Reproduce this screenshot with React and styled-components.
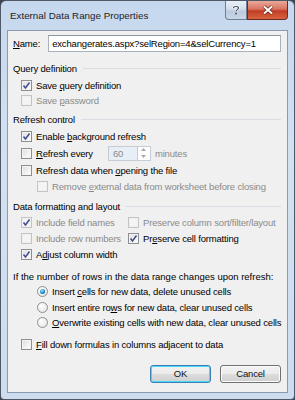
import React, { useState } from "react";
import styled, { createGlobalStyle } from "styled-components";

const Global = createGlobalStyle`
  html, body { margin: 0; padding: 0; background: #3b4250; }
  body { width: 295px; height: 400px; overflow: hidden; }
`;

const Frame = styled.div`
  box-sizing: border-box;
  width: 295px;
  height: 400px;
  border: 1px solid #4e5867;
  border-radius: 6px 6px 4px 4px;
  background: linear-gradient(180deg, #c6d8ee 0%, #d3e1f2 40%, #cddcef 100%);
  display: flex;
  flex-direction: column;
  padding: 0 6px 6px 6px;
  font-family: "Liberation Sans", Arial, sans-serif;
  font-size: 9.5px;
  letter-spacing: -0.17px;
  color: #000;
`;

const TitleBar = styled.div`
  height: 29px;
  display: flex;
  align-items: flex-start;
  justify-content: space-between;
`;

const Title = styled.div`
  padding: 9px 0 0 3px;
  font-size: 9.8px;
  letter-spacing: 0;
  color: #1e1e1e;
`;

const Caption = styled.div`
  display: flex;
`;

const CapButton = styled.div`
  box-sizing: border-box;
  width: ${(p) => p.w}px;
  height: 19px;
  border: 1px solid ${(p) => (p.red ? "#6d2a21" : "#6f7f94")};
  border-top: none;
  border-radius: ${(p) => (p.red ? "0 0 4px 0" : "0 0 0 4px")};
  background: ${(p) =>
    p.red
      ? "linear-gradient(180deg, #e9a99c 0%, #d9735f 45%, #c13d24 55%, #d7643f 100%)"
      : "linear-gradient(180deg, #e7eef7 0%, #d4dfec 45%, #bccbdd 55%, #c9d6e6 100%)"};
  display: flex;
  align-items: center;
  justify-content: center;
`;

const Panel = styled.div`
  flex: 1;
  box-sizing: border-box;
  background: #f0f0f0;
  border: 1px solid #8a9bb0;
  padding: 3px 6px 0 5px;
  display: flex;
  flex-direction: column;
`;

const NameRow = styled.div`
  display: flex;
  align-items: center;
  height: 17px;
  margin-top: 1px;
  gap: 8px;
`;

const NameInput = styled.div`
  flex: 1;
  box-sizing: border-box;
  height: 17px;
  border: 1px solid #a9b1bb;
  border-top-color: #8d959e;
  background: #fff;
  padding: 0 3px;
  display: flex;
  align-items: center;
  white-space: nowrap;
  overflow: hidden;
`;

const Section = styled.div`
  display: flex;
  align-items: center;
  height: 16px;
  margin-top: ${(p) => p.top}px;
  white-space: nowrap;
  &::after {
    content: "";
    flex: 1;
    height: 1px;
    margin-left: 6px;
    background: #d8dde3;
  }
`;

const Row = styled.div`
  display: flex;
  align-items: center;
  height: ${(p) => p.h || 16}px;
  padding-left: ${(p) => p.indent || 0}px;
  margin-top: ${(p) => p.top || 0}px;
  white-space: nowrap;
  color: ${(p) => (p.disabled ? "#8b8b8b" : "#000")};
`;

const Label = styled.span`
  white-space: pre;
`;

const Grid2 = styled.div`
  display: grid;
  grid-template-columns: 107px 1fr;
  padding-left: 8px;
`;

const Box = styled.span`
  box-sizing: border-box;
  width: 11px;
  height: 11px;
  margin-right: 4px;
  flex: none;
  border: 1px solid ${(p) => (p.disabled ? "#c4c4c4" : "#8e8f8f")};
  background: ${(p) =>
    p.disabled ? "#f4f4f4" : "linear-gradient(135deg, #dcdcdc 0%, #f6f6f6 70%, #fff 100%)"};
  box-shadow: inset 0 0 0 1px ${(p) => (p.disabled ? "#f0f0f0" : "#f4f4f4")};
  display: flex;
  align-items: center;
  justify-content: center;
`;

const Radio = styled.span`
  box-sizing: border-box;
  width: 11px;
  height: 11px;
  margin-right: 4px;
  flex: none;
  border-radius: 50%;
  border: 1px solid #8e8f8f;
  background: radial-gradient(circle at 35% 35%, #fff 0%, #e0e0e0 100%);
  display: flex;
  align-items: center;
  justify-content: center;
  &::after {
    content: "";
    display: ${(p) => (p.on ? "block" : "none")};
    width: 5px;
    height: 5px;
    border-radius: 50%;
    background: radial-gradient(circle at 40% 35%, #9fe4ff 0%, #1b88c6 55%, #0a3f73 100%);
  }
`;

const Spin = styled.span`
  box-sizing: border-box;
  width: 43px;
  height: 15px;
  margin: 0 4px 0 15px;
  border: 1px solid #c6ccd3;
  background: #fff;
  display: flex;
  color: #8b8b8b;
`;

const SpinText = styled.span`
  flex: 1;
  padding-left: 4px;
  line-height: 13px;
  background: #e8eef6;
`;

const SpinArrows = styled.span`
  width: 12px;
  border-left: 1px solid #c6ccd3;
  display: flex;
  flex-direction: column;
  align-items: center;
  justify-content: space-around;
`;

const Grey = styled.span`
  color: #8b8b8b;
`;

const Note = styled.div`
  height: 16px;
  display: flex;
  align-items: center;
  margin-top: 6px;
  white-space: pre;
  letter-spacing: 0;
`;

const Buttons = styled.div`
  display: flex;
  justify-content: flex-end;
  gap: 9px;
  margin-top: 12px;
`;

const Btn = styled.div`
  box-sizing: border-box;
  width: 61px;
  height: 18px;
  border: 1px solid ${(p) => (p.def ? "#3c7fb1" : "#707070")};
  border-radius: 3px;
  background: linear-gradient(180deg, #f2f2f2 0%, #ebebeb 50%, #dddddd 51%, #cfcfcf 100%);
  box-shadow: inset 0 0 0 1px ${(p) => (p.def ? "#48d8fb" : "#fcfcfc")};
  display: flex;
  align-items: center;
  justify-content: center;
  color: #111;
`;

const U = styled.span`
  text-decoration: underline;
`;

const Check = () => (
  <svg width="9" height="9" viewBox="0 0 9 9">
    <path d="M1.5 4.5 L3.5 7 L7.5 1.5" fill="none" stroke="#3f4d8c" strokeWidth="1.5" />
  </svg>
);

const CheckItem = ({ checked, disabled, children, ...rest }) => (
  <Row disabled={disabled} {...rest}>
    <Box disabled={disabled}>{checked && <Check />}</Box>
    <Label>{children}</Label>
  </Row>
);

const RadioItem = ({ on, children }) => (
  <Row indent={24} h={15.5}>
    <Radio on={on} />
    <Label>{children}</Label>
  </Row>
);

const App = () => {
  const [mode] = useState(0);
  return (
    <>
      <Global />
      <Frame>
        <TitleBar>
          <Title>External Data Range Properties</Title>
          <Caption>
            <CapButton w={22}>
              <svg width="8" height="10" viewBox="0 0 8 10">
                <path
                  d="M1.5 3 C1.5 1 6.5 1 6.5 3 C6.5 4.5 4 4.8 4 6.5"
                  fill="none"
                  stroke="#fff"
                  strokeWidth="2.6"
                />
                <path
                  d="M1.5 3 C1.5 1 6.5 1 6.5 3 C6.5 4.5 4 4.8 4 6.5"
                  fill="none"
                  stroke="#3d4c63"
                  strokeWidth="1.2"
                />
                <rect x="3.2" y="7.8" width="1.6" height="1.6" fill="#3d4c63" />
              </svg>
            </CapButton>
            <CapButton w={41} red>
              <svg width="12" height="10" viewBox="0 0 12 10">
                <path d="M2 1.5 L10 8.5 M10 1.5 L2 8.5" stroke="#5a1a10" strokeWidth="3.2" />
                <path d="M2 1.5 L10 8.5 M10 1.5 L2 8.5" stroke="#fff" strokeWidth="2" />
              </svg>
            </CapButton>
          </Caption>
        </TitleBar>
        <Panel>
          <NameRow>
            <Label>
              <U>N</U>ame:
            </Label>
            <NameInput>exchangerates.aspx?selRegion=4&amp;selCurrency=1</NameInput>
          </NameRow>
          <Section top={8}>Query definition</Section>
          <CheckItem indent={8} top={1} checked>
            Save <U>q</U>uery definition
          </CheckItem>
          <CheckItem indent={8} disabled h={15}>
            Save <U>p</U>assword
          </CheckItem>
          <Section top={3}>Refresh control</Section>
          <CheckItem indent={8} top={1} checked>
            Enable <U>b</U>ackground refresh
          </CheckItem>
          <Row indent={8} top={1}>
            <Box />
            <Label>
              <U>R</U>efresh every
            </Label>
            <Spin>
              <SpinText>60</SpinText>
              <SpinArrows>
                <svg width="5" height="3" viewBox="0 0 5 3">
                  <path d="M0 3 L2.5 0 L5 3 Z" fill="#a8a8a8" />
                </svg>
                <svg width="5" height="3" viewBox="0 0 5 3">
                  <path d="M0 0 L2.5 3 L5 0 Z" fill="#a8a8a8" />
                </svg>
              </SpinArrows>
            </Spin>
            <Grey>minutes</Grey>
          </Row>
          <CheckItem indent={8} top={1}>
            Refresh data when <U>o</U>pening the file
          </CheckItem>
          <CheckItem indent={24} disabled>
            Remove <U>e</U>xternal data from worksheet before closing
          </CheckItem>
          <Section top={4}>Data formatting and layout</Section>
          <Grid2>
            <CheckItem checked disabled>
              Include field names
            </CheckItem>
            <CheckItem disabled>Preserve column sort/filter/layout</CheckItem>
            <CheckItem disabled>Include row numbers</CheckItem>
            <CheckItem checked>
              Pr<U>e</U>serve cell formatting
            </CheckItem>
            <CheckItem checked>
              A<U>d</U>just column width
            </CheckItem>
          </Grid2>
          <Note>If the number of rows in the data range changes upon refresh:</Note>
          <RadioItem on={mode === 0}>
            Insert <U>c</U>ells for new data, delete unused cells
          </RadioItem>
          <RadioItem on={mode === 1}>
            Insert entire ro<U>w</U>s for new data, clear unused cells
          </RadioItem>
          <RadioItem on={mode === 2}>
            <U>O</U>verwrite existing cells with new data, clear unused cells
          </RadioItem>
          <CheckItem indent={8} top={6}>
            <U>F</U>ill down formulas in columns adjacent to data
          </CheckItem>
          <Buttons>
            <Btn def>OK</Btn>
            <Btn>Cancel</Btn>
          </Buttons>
        </Panel>
      </Frame>
    </>
  );
};

export default App;
